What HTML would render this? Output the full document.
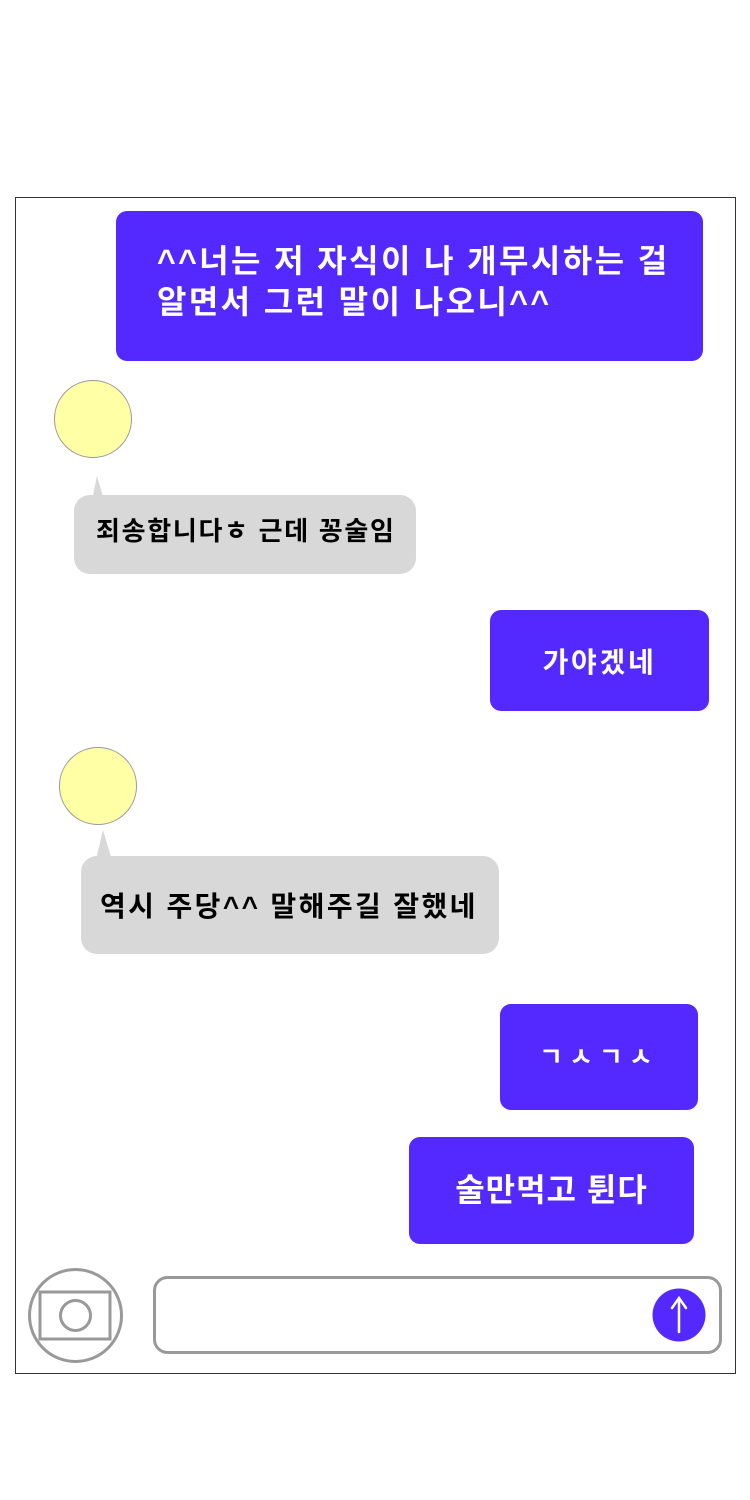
<!DOCTYPE html>
<html><head><meta charset="utf-8"><style>
body{margin:0;width:750px;height:1500px;background:#fff;position:relative;overflow:hidden;font-family:"Liberation Sans","Noto Sans CJK KR",sans-serif;}
.a{position:absolute;box-sizing:border-box;}
.b{background:#5429ff;color:#fff;border-radius:11px;display:flex;align-items:center;justify-content:center;font-weight:bold;}
.g{background:#d8d8d8;color:#000;border-radius:16px;display:flex;align-items:center;font-weight:bold;}
.av{background:#ffffa6;border:1px solid #999;border-radius:50%;}
</style></head><body>
<div class="a" style="left:15px;top:197px;width:721px;height:1177px;border:1px solid #333;"></div>

<div class="a b" style="left:116px;top:211px;width:587px;height:150px;align-items:flex-start;justify-content:flex-start;padding:30px 0 0 41px;font-size:32px;line-height:41px;letter-spacing:2.4px;white-space:nowrap;">^^너는 저 자식이 나 개무시하는 걸<br>알면서 그런 말이 나오니^^</div>

<div class="a av" style="left:54px;top:380px;width:78px;height:78px;"></div>
<svg class="a" style="left:80px;top:476px" width="30" height="24"><polygon points="12,24 17,0 24,24" fill="#d8d8d8"/></svg>
<div class="a g" style="left:74px;top:495px;width:342px;height:79px;padding-left:22px;padding-bottom:10px;font-size:26px;letter-spacing:1.7px;">죄송합니다ㅎ 근데 꽁술임</div>

<div class="a b" style="left:490px;top:610px;width:219px;height:101px;font-size:28px;letter-spacing:2.7px;">가야겠네</div>

<div class="a av" style="left:59px;top:747px;width:78px;height:78px;"></div>
<svg class="a" style="left:90px;top:830px" width="30" height="30"><polygon points="6,30 13,0 22,30" fill="#d8d8d8"/></svg>
<div class="a g" style="left:81px;top:856px;width:418px;height:98px;padding-left:19px;font-size:28px;letter-spacing:2.4px;">역시 주당^^ 말해주길 잘했네</div>

<div class="a b" style="left:500px;top:1004px;width:198px;height:106px;font-size:26px;letter-spacing:6px;padding-bottom:4px;">ㄱㅅㄱㅅ</div>

<div class="a b" style="left:409px;top:1137px;width:285px;height:107px;font-size:32px;letter-spacing:1px;padding-bottom:6px;">술만먹고 튄다</div>

<svg class="a" style="left:0;top:1260px" width="750" height="110">
<circle cx="75.5" cy="55.5" r="46" fill="none" stroke="#999" stroke-width="3"/>
<rect x="40" y="32" width="70" height="47" fill="none" stroke="#999" stroke-width="3"/>
<ellipse cx="75.5" cy="55.5" rx="15" ry="15" fill="none" stroke="#999" stroke-width="3"/>
<rect x="154.5" y="17.5" width="566" height="75" rx="13" fill="none" stroke="#999" stroke-width="3"/>
<circle cx="679" cy="55" r="26.5" fill="#5429ff"/>
<path d="M679 72V39M672 48L679 38L686 48" fill="none" stroke="#fff" stroke-width="2.5" stroke-linecap="round"/>
</svg>
</body></html>
